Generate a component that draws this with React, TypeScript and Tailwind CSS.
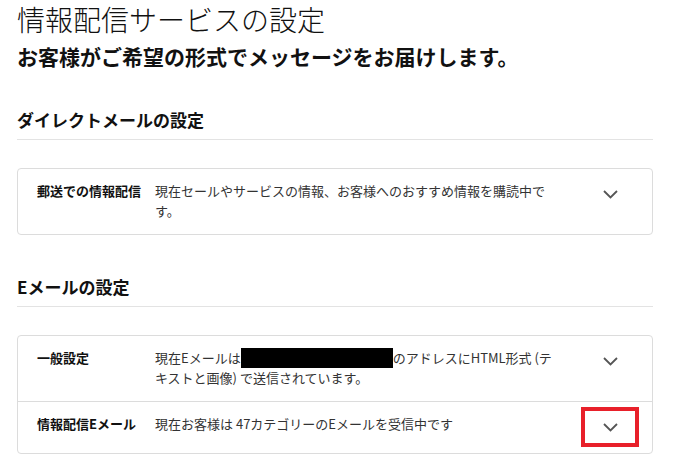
import React from 'react';

const font = { fontFamily: '"Noto Sans CJK JP", "Noto Sans", sans-serif' };

const Chevron = () => (
  <svg width="15" height="9" viewBox="0 0 15 9" fill="none">
    <polyline points="1,1 7.5,7.5 14,1" stroke="#555" strokeWidth="1.8" />
  </svg>
);

type RowProps = {
  label: string;
  children: React.ReactNode;
  highlight?: boolean;
  last?: boolean;
};

const Row = ({ label, children, highlight, last }: RowProps) => (
  <div className={`flex items-start pl-[19px] pr-[20px] pt-3 pb-[13px] ${last ? '' : 'border-b border-[#dcdcdc]'}`}>
    <div className="w-[118px] shrink-0 text-[13px] leading-[20px] font-bold text-[#111]">{label}</div>
    <div className="w-[408px] text-[13px] leading-[20px] text-[#333]">{children}</div>
    <div className="flex-1 flex justify-end">
      <div
        className={`w-[44px] h-[26px] flex items-center justify-center ${
          highlight ? 'outline-[4px] outline-solid outline-[#e8202a] outline-offset-[3px]' : ''
        }`}
      >
        <Chevron />
      </div>
    </div>
  </div>
);

const Section = ({ title, children }: { title: string; children: React.ReactNode }) => (
  <section>
    <h2 className="text-[17px] leading-[24px] font-bold text-[#111] pb-[7px] border-b border-[#e3e3e3]">{title}</h2>
    <div className="mt-[28px] rounded border border-[#dcdcdc] bg-white">{children}</div>
  </section>
);

export default function App() {
  return (
    <div className="w-[673px] h-[474px] bg-white pl-[17px] pr-[20px] overflow-hidden" style={font}>
      <h1 className="text-[28px] leading-[38px] font-light text-[#111]">情報配信サービスの設定</h1>
      <p className="mt-[4px] text-[21px] leading-[28px] font-bold text-[#111]">お客様がご希望の形式でメッセージをお届けします。</p>

      <div className="mt-[38px]">
        <Section title="ダイレクトメールの設定">
          <Row label="郵送での情報配信" last>
            現在セールやサービスの情報、お客様へのおすすめ情報を購読中です。
          </Row>
        </Section>
      </div>

      <div className="mt-[40px]">
        <Section title="Eメールの設定">
          <Row label="一般設定">
            現在Eメールは
            <span className="inline-block w-[152px] h-[20px] bg-black align-top" />
            のアドレスにHTML形式 (テキストと画像) で送信されています。
          </Row>
          <Row label="情報配信Eメール" highlight last>
            現在お客様は 47カテゴリーのEメールを受信中です
          </Row>
        </Section>
      </div>
    </div>
  );
}
